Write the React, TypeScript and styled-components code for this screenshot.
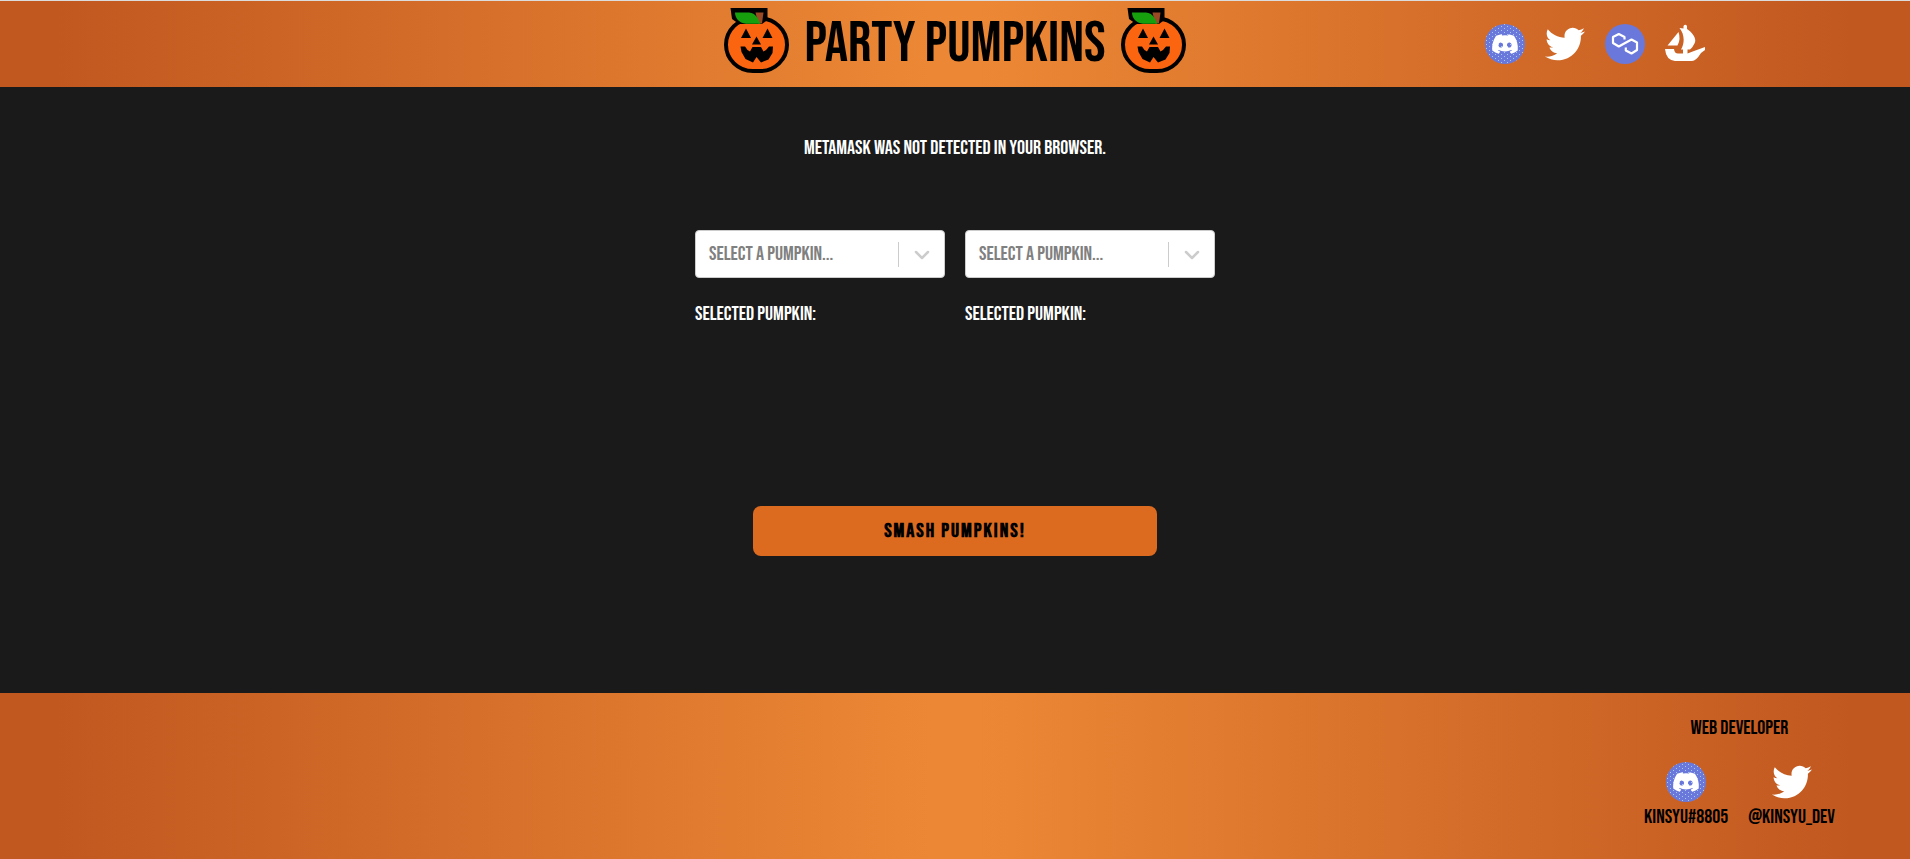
import React, { useId } from "react";
import styled, { createGlobalStyle } from "styled-components";
import { FaDiscord, FaTwitter } from "react-icons/fa";

const GlobalStyle = createGlobalStyle`
  *, *::before, *::after { box-sizing: border-box; }
  body {
    margin: 0;
    background: #1a1a1a;
    color: #fff;
    font-family: "Bebas Neue", Oswald, "Roboto Condensed", sans-serif;
    font-size: 20px;
    line-height: 24px;
  }
  a { color: inherit; text-decoration: none; }
  p, h1, h2 { margin: 0; font-weight: 400; }
  h2 { font-size: 20px; }
`;

const gradient =
  "linear-gradient(90deg, #c15820 3%, #ec8835 49%, #ec8835 51%, #c15820 97%)";

const Page = styled.div`
  display: flex;
  flex-direction: column;
  min-height: 100vh;
`;

const Header = styled.header`
  display: grid;
  grid-template-columns: repeat(3, 1fr);
  column-gap: 10px;
  align-items: center;
  height: 87px;
  border-top: 1px solid #dcdcdc;
  background: ${gradient};
`;

const Brand = styled.div`
  grid-column: 2;
  display: flex;
  justify-content: center;
  align-items: center;
  gap: 15px;
  padding-bottom: 8px;
`;

const Title = styled.h1`
  color: #000;
  font-size: 58px;
  line-height: 64px;
  white-space: nowrap;
  padding-top: 8px;
`;

const Socials = styled.nav`
  display: flex;
  justify-content: center;
  gap: 20px;
`;

const IconLink = styled.a`
  display: block;
  width: 40px;
  height: 40px;
  color: #fff;

  > svg {
    display: block;
    width: 100%;
    height: 100%;
  }
`;

const Main = styled.main`
  flex: 1;
  display: flex;
  flex-direction: column;
  align-items: center;
  padding: 49px 20px;
`;

const Pickers = styled.div`
  display: flex;
  gap: 20px;
  margin-top: 70px;
`;

const Picker = styled.div`
  display: flex;
  flex-direction: column;
  gap: 24px;
  width: 250px;
  min-height: 228px;
`;

const SelectBox = styled.div`
  position: relative;
  height: 48px;
`;

const Select = styled.select`
  appearance: none;
  width: 100%;
  height: 100%;
  padding: 0 48px 0 13px;
  border: 1px solid #ccc;
  border-radius: 4px;
  background: #fff;
  color: #808080;
  font: inherit;
`;

const Indicator = styled.span`
  position: absolute;
  top: 12px;
  right: 0;
  display: flex;
  align-items: center;
  height: 25px;
  padding: 0 13px;
  border-left: 1px solid #ccc;
  color: #ccc;
  pointer-events: none;
`;

const SmashButton = styled.button`
  width: 404px;
  max-width: 100%;
  height: 50px;
  margin-top: 48px;
  border: 0;
  border-radius: 8px;
  background: #dc6b20;
  color: #000;
  font: inherit;
  font-weight: 700;
  letter-spacing: 2px;
`;

const Footer = styled.footer`
  display: flex;
  justify-content: flex-end;
  min-height: 166px;
  padding: 23px 75px 23px 20px;
  background: ${gradient};
  color: #000;
`;

const Credits = styled.div`
  display: flex;
  flex-direction: column;
  align-items: center;
  gap: 22px;
`;

const Contacts = styled.div`
  display: flex;
  gap: 20px;
`;

const Contact = styled.div`
  display: flex;
  flex-direction: column;
  align-items: center;
  gap: 3px;
`;

function Pumpkin() {
  return (
    <svg width="65" height="65" viewBox="0 0 65 65" aria-hidden="true">
      <rect x="2" y="10.5" width="61" height="52.5" rx="27" fill="#fb6510" stroke="#000" strokeWidth="4" />
      <path d="M6.5 0H43.5V12L38 16H15L8 11Z" fill="#000" />
      <path d="M31.5 4.5H39.5L38 15.5H34Z" fill="#9a4a24" />
      <path d="M11 4.5H25C32 5 34 11 36.5 15.8H22C15 15 11 10 11 4.5Z" fill="#17a00e" />
      <path d="M22 20.5L17 30H27ZM43.5 20.5L38.5 30H48.5ZM32.5 28.5L28 36.5H37Z" />
      <path d="M16.5 38.5H21L23.5 42L26 43.5L28.5 39H37L39.5 43.5L42 42L45 38.5H49L48.5 45L44.5 51.5L37 54.5L32.5 49L29 54.5L21.5 51L17.5 44Z" />
    </svg>
  );
}

function DiscordIcon() {
  const id = useId();
  return (
    <svg viewBox="0 0 40 40" aria-hidden="true">
      <defs>
        <pattern id={id} width="6" height="4" patternUnits="userSpaceOnUse">
          <rect width="6" height="4" fill="#6a78db" />
          <rect width="1" height="1" x="1" fill="#a3cbea" />
          <rect width="1" height="1" x="4" y="2" fill="#a3cbea" />
        </pattern>
      </defs>
      <circle cx="20" cy="20" r="20" fill={`url(#${id})`} />
      <FaDiscord x="6" y="6" size={28} />
    </svg>
  );
}

function PolygonIcon() {
  return (
    <svg viewBox="0 0 40 40" aria-hidden="true">
      <circle cx="20" cy="20" r="20" fill="#6a78db" />
      <path
        d="M19.5 15.5V13L13.8 10L8 13V19L13.8 22.5L26.5 15.5L32 18.5V26L26.5 29.5L20.8 26.5V23.5"
        fill="none"
        stroke="#fff"
        strokeWidth="2.2"
        strokeLinejoin="round"
      />
    </svg>
  );
}

function OpenSeaIcon() {
  return (
    <svg viewBox="0 0 40 40" fill="currentColor" aria-hidden="true">
      <path d="M13.5 8L2.5 21.5H12.5Q16 15 13.5 8Z" />
      <path d="M14.5 4L18.5 4.5V2Q20.3 -.5 22 2V5C28 9 32 15 29.5 19.5C28 22 27 24 25 25.5H22.5V29.5L29 27L40 23V26L36 29Q31 37 27 37H10Q1 36 0 25H9Q9.5 29.5 13 29.5H18V25.5H16C20 19 19.5 10 14.5 4Z" />
    </svg>
  );
}

function Chevron() {
  return (
    <svg width="20" height="20" viewBox="0 0 20 20" fill="none" stroke="currentColor" strokeWidth="2.5" strokeLinecap="round" strokeLinejoin="round" aria-hidden="true">
      <path d="M4 7L10 13L16 7" />
    </svg>
  );
}

function PumpkinPicker({ label }: { label: string }) {
  return (
    <Picker>
      <SelectBox>
        <Select aria-label={label} defaultValue="">
          <option value="">Select a pumpkin...</option>
        </Select>
        <Indicator>
          <Chevron />
        </Indicator>
      </SelectBox>
      <p>Selected Pumpkin:</p>
    </Picker>
  );
}

export default function App() {
  return (
    <Page>
      <GlobalStyle />
      <Header>
        <Brand>
          <Pumpkin />
          <Title>Party Pumpkins</Title>
          <Pumpkin />
        </Brand>
        <Socials aria-label="Social links">
          <IconLink href="#discord" aria-label="Discord"><DiscordIcon /></IconLink>
          <IconLink href="#twitter" aria-label="Twitter"><FaTwitter /></IconLink>
          <IconLink href="#polygon" aria-label="Polygon"><PolygonIcon /></IconLink>
          <IconLink href="#opensea" aria-label="OpenSea"><OpenSeaIcon /></IconLink>
        </Socials>
      </Header>
      <Main>
        <p>MetaMask was not detected in your browser.</p>
        <Pickers>
          <PumpkinPicker label="First pumpkin" />
          <PumpkinPicker label="Second pumpkin" />
        </Pickers>
        <SmashButton type="button">Smash Pumpkins!</SmashButton>
      </Main>
      <Footer>
        <Credits>
          <h2>Web Developer</h2>
          <Contacts>
            <Contact>
              <IconLink href="#kinsyu-discord" aria-label="Kinsyu on Discord"><DiscordIcon /></IconLink>
              <span>Kinsyu#8805</span>
            </Contact>
            <Contact>
              <IconLink href="#kinsyu-twitter" aria-label="Kinsyu on Twitter"><FaTwitter /></IconLink>
              <span>@Kinsyu_dev</span>
            </Contact>
          </Contacts>
        </Credits>
      </Footer>
    </Page>
  );
}
